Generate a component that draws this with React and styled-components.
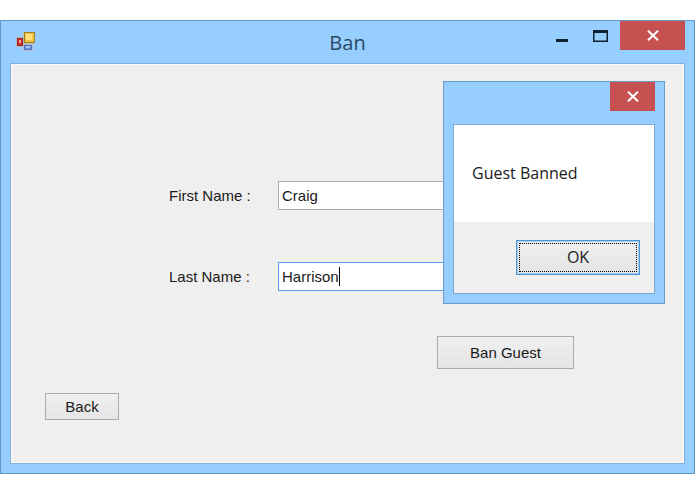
import React, { useState } from "react";
import styled, { createGlobalStyle } from "styled-components";

const GlobalStyle = createGlobalStyle`
  * {
    box-sizing: border-box;
  }
  body {
    margin: 0;
    background: #ffffff;
    color: #1a1a1a;
    font-family: "Liberation Sans", Arial, sans-serif;
    font-size: 15px;
  }
`;

const Window = styled.main`
  position: relative;
  margin: 20px 0;
  padding: 0 9px 9px;
  border: 1px solid #6196c8;
  background: #96ceff;
`;

const TitleBar = styled.header`
  display: grid;
  grid-template-columns: 1fr auto 1fr;
  height: 42px;
`;

const AppIcon = styled.svg`
  width: 20px;
  height: 20px;
  margin: 11px 0 0 6px;
`;

const Title = styled.h1`
  margin: 0;
  color: #2c4963;
  font-family: "Open Sans", "Noto Sans", sans-serif;
  font-size: 20px;
  font-weight: 400;
  line-height: 43px;
`;

const Controls = styled.div`
  display: flex;
  justify-content: flex-end;
  align-items: flex-start;
`;

const ControlButton = styled.button`
  display: flex;
  align-items: center;
  justify-content: center;
  width: ${props => props.$width}px;
  height: 29px;
  padding: 0;
  border: 0;
  color: ${props => (props.$close ? "#ffffff" : "#10202e")};
  background: ${props => (props.$close ? "#c75050" : "transparent")};
`;

const Client = styled.div`
  padding: 117px 110px 43px 34px;
  border: 1px solid #84b1da;
  background: #efefef;
  box-shadow: inset 0 0 0 1px #f8fafc;
`;

const Form = styled.form`
  display: flex;
  flex-direction: column;
`;

const Row = styled.div`
  display: grid;
  grid-template-columns: 109px 1fr;
  align-items: center;
  margin: 0 0 ${props => (props.$last ? 45 : 52)}px 124px;
`;

const Field = styled.div`
  position: relative;
`;

const TextInput = styled.input`
  display: block;
  width: 100%;
  height: 29px;
  padding: 0 3px;
  border: 1px solid ${props => (props.$active ? "#569de5" : "#ababab")};
  border-radius: 0;
  outline: none;
  background: #ffffff;
  color: inherit;
  font: inherit;
`;

const Caret = styled.span`
  position: absolute;
  top: 5px;
  left: 61px;
  width: 1px;
  height: 19px;
  background: #000000;
`;

const Button = styled.button`
  width: ${props => props.$width}px;
  height: ${props => props.$height}px;
  padding: 0;
  border: 1px solid #ababab;
  background: linear-gradient(#f0f0f0, #e4e4e4);
  color: inherit;
  font: inherit;
`;

const BanButton = styled(Button)`
  align-self: flex-end;
  margin-bottom: 24px;
`;

const Dialog = styled.section`
  position: absolute;
  top: 60px;
  right: 29px;
  width: 222px;
  padding: 0 9px 9px;
  border: 1px solid #6a9cc9;
  background: #96ceff;
  font-family: "Open Sans", "Noto Sans", sans-serif;
  font-size: 16px;
`;

const DialogBar = styled.div`
  display: flex;
  justify-content: flex-end;
  height: 42px;
`;

const DialogBody = styled.div`
  border: 1px solid #7daad2;
  background: #efefef;
`;

const Message = styled.p`
  margin: 0;
  padding: 0 18px;
  background: #ffffff;
  line-height: 97px;
`;

const DialogFooter = styled.div`
  display: flex;
  justify-content: flex-end;
  padding: 18px 14px;
`;

const OkButton = styled(Button)`
  padding: 2px;
  border-color: #4a95d6;
  box-shadow: inset 0 0 0 1px #a5cdf0;
`;

const FocusRect = styled.span`
  display: block;
  border: 1px dotted #000000;
  line-height: 27px;
`;

const CloseGlyph = () => (
  <svg width="12" height="11" viewBox="0 0 12 11" aria-hidden="true">
    <path d="M1 .7 11 10.3M11 .7 1 10.3" stroke="currentColor" strokeWidth="2" />
  </svg>
);

const FormIcon = () => (
  <AppIcon viewBox="0 0 20 20" aria-hidden="true">
    <rect x="7" y="0" width="12" height="12" fill="#c3bfa6" />
    <rect x="8.5" y=".5" width="10" height="10" fill="#f2c63f" stroke="#a07d2a" />
    <rect x="10" y="2" width="6" height="6" fill="#ffe07a" />
    <rect x="0" y="5" width="8" height="10" fill="#b9b9bd" />
    <rect x="1.5" y="6.5" width="5" height="7" fill="#cc3327" stroke="#922626" />
    <rect x="3" y="8" width="2" height="3" fill="#f09a8c" />
    <rect x="7" y="12" width="10" height="7" fill="#b4bccb" />
    <rect x="8.5" y="13.5" width="7" height="4" fill="#7093e0" stroke="#5674c4" />
    <rect x="10" y="14" width="4" height="2" fill="#a9c2f5" />
  </AppIcon>
);

const MessageDialog = ({ message, onClose }) => (
  <Dialog role="dialog" aria-label={message}>
    <DialogBar>
      <ControlButton $width={45} $close aria-label="Close" onClick={onClose}>
        <CloseGlyph />
      </ControlButton>
    </DialogBar>
    <DialogBody>
      <Message>{message}</Message>
      <DialogFooter>
        <OkButton $width={124} $height={35} onClick={onClose}>
          <FocusRect>OK</FocusRect>
        </OkButton>
      </DialogFooter>
    </DialogBody>
  </Dialog>
);

const App = () => {
  const [firstName, setFirstName] = useState("Craig");
  const [lastName, setLastName] = useState("Harrison");
  const [open, setOpen] = useState(true);

  const handleSubmit = e => {
    e.preventDefault();
    setOpen(true);
  };

  return (
    <>
      <GlobalStyle />
      <Window>
        <TitleBar>
          <FormIcon />
          <Title>Ban</Title>
          <Controls>
            <ControlButton $width={39} aria-label="Minimize">
              <svg width="12" height="12" viewBox="0 0 12 12" aria-hidden="true">
                <path d="M0 9h12v3H0z" fill="currentColor" />
              </svg>
            </ControlButton>
            <ControlButton $width={39} aria-label="Maximize">
              <svg width="15" height="12" viewBox="0 0 15 12" aria-hidden="true">
                <path d="M0 0h15v12H0zM1.5 3v7.5h12V3z" fill="currentColor" fillRule="evenodd" />
              </svg>
            </ControlButton>
            <ControlButton $width={65} $close aria-label="Close">
              <CloseGlyph />
            </ControlButton>
          </Controls>
        </TitleBar>
        <Client>
          <Form onSubmit={handleSubmit}>
            <Row>
              <label htmlFor="firstName">First Name :</label>
              <TextInput
                id="firstName"
                value={firstName}
                onChange={e => setFirstName(e.target.value)}
              />
            </Row>
            <Row $last>
              <label htmlFor="lastName">Last Name :</label>
              <Field>
                <TextInput
                  id="lastName"
                  $active
                  value={lastName}
                  onChange={e => setLastName(e.target.value)}
                />
                {open && <Caret />}
              </Field>
            </Row>
            <BanButton type="submit" $width={137} $height={33}>
              Ban Guest
            </BanButton>
          </Form>
          <Button type="button" $width={74} $height={27}>
            Back
          </Button>
        </Client>
        {open && <MessageDialog message="Guest Banned" onClose={() => setOpen(false)} />}
      </Window>
    </>
  );
};

export default App;
